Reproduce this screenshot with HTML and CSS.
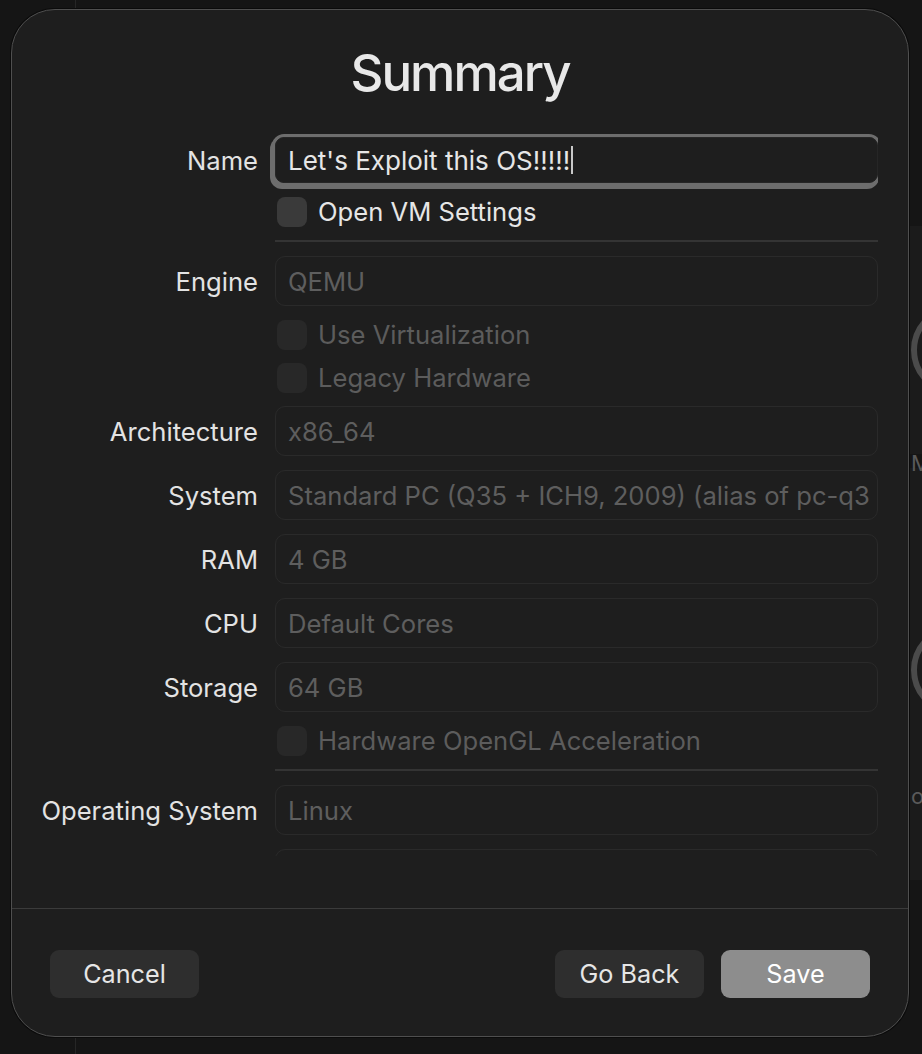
FILE: index.html
```html
<!DOCTYPE html>
<html>
<head>
<meta charset="utf-8">
<link rel="stylesheet" href="styles.css">
</head>
<body>
<div class="desktop">
  <div class="bg-line"></div>
  <div class="bg-card bg-card-1"></div>
  <div class="bg-card bg-card-2"></div>
  <div class="bg-icon bg-icon-1"></div>
  <div class="bg-icon bg-icon-2"></div>
  <div class="bg-text bg-text-1">M</div>
  <div class="bg-text bg-text-2">o</div>

  <div class="dialog">
    <h1 class="title">Summary</h1>
    <div class="scroll">
      <div class="form">
        <div class="label">Name</div>
        <div class="field field-name"><span class="value">Let's Exploit this OS!!!!!</span><span class="caret"></span></div>

        <div class="check enabled"><span class="box"></span><span>Open VM Settings</span></div>
        <div class="sep"></div>

        <div class="label">Engine</div>
        <div class="field"><span class="value">QEMU</span></div>

        <div class="check"><span class="box"></span><span>Use Virtualization</span></div>
        <div class="check"><span class="box"></span><span>Legacy Hardware</span></div>

        <div class="label">Architecture</div>
        <div class="field"><span class="value">x86_64</span></div>

        <div class="label">System</div>
        <div class="field"><span class="value">Standard PC (Q35 + ICH9, 2009) (alias of pc-q35)</span></div>

        <div class="label">RAM</div>
        <div class="field"><span class="value">4 GB</span></div>

        <div class="label">CPU</div>
        <div class="field"><span class="value">Default Cores</span></div>

        <div class="label">Storage</div>
        <div class="field"><span class="value">64 GB</span></div>

        <div class="check"><span class="box"></span><span>Hardware OpenGL Acceleration</span></div>
        <div class="sep"></div>

        <div class="label">Operating System</div>
        <div class="field"><span class="value">Linux</span></div>

        <div class="label"></div>
        <div class="field"><span class="value"></span></div>
      </div>
    </div>
    <div class="spacer"></div>
    <div class="divider"></div>
    <div class="footer">
      <button class="btn btn-cancel">Cancel</button>
      <button class="btn">Go Back</button>
      <button class="btn btn-primary">Save</button>
    </div>
  </div>
</div>
</body>
</html>
```

FILE: styles.css
```css
html, body {
  margin: 0;
  padding: 0;
  background: #151515;
}

.desktop {
  position: relative;
  width: 922px;
  height: 1054px;
  overflow: hidden;
  background: #151515;
  font-family: "Inter", "Liberation Sans", sans-serif;
}

.bg-line {
  position: absolute;
  left: 75px;
  top: 0;
  width: 1px;
  height: 1054px;
  background: #262626;
}

.bg-card {
  position: absolute;
  left: 880px;
  width: 80px;
  background: #1b1b1b;
}
.bg-card-1 { top: 226px; height: 228px; }
.bg-card-2 { top: 468px; height: 412px; }

.bg-icon {
  position: absolute;
  width: 90px;
  height: 90px;
  border: 6px solid #4b4b4b;
  border-radius: 50%;
  box-sizing: border-box;
}
.bg-icon-1 { left: 911px; top: 305px; }
.bg-icon-2 { left: 911px; top: 625px; }

.bg-text {
  position: absolute;
  left: 911px;
  font-size: 22px;
  color: #5a5a5a;
}
.bg-text-1 { top: 450px; }
.bg-text-2 { top: 783px; }

.dialog {
  position: relative;
  z-index: 1;
  margin: 9px 0 0 11px;
  width: 898px;
  height: 1028px;
  box-sizing: border-box;
  background: #1e1e1e;
  border: 1px solid #4f4f4f;
  border-radius: 44px;
  box-shadow: 0 0 0 1px #0b0b0b;
  display: flex;
  flex-direction: column;
  overflow: hidden;
}

.title {
  margin: 36px 0 0 0;
  height: 53px;
  font-size: 51px;
  line-height: 53px;
  font-weight: 500;
  text-align: center;
  color: #e8e8e8;
  letter-spacing: -2px;
}

.scroll {
  margin-top: 26px;
  height: 731px;
  width: 866px;
  overflow: hidden;
  flex: none;
}

.form {
  padding-top: 12px;
  display: grid;
  grid-template-columns: 246px 603px;
  column-gap: 17px;
  row-gap: 14px;
  align-items: center;
}

.label {
  grid-column: 1;
  text-align: right;
  font-size: 25.6px;
  color: #e3e3e3;
  white-space: nowrap;
}

.field {
  grid-column: 2;
  height: 50px;
  box-sizing: border-box;
  border: 1px solid #2a2a2a;
  border-radius: 10px;
  padding: 0 7px 0 12px;
  display: flex;
  align-items: center;
  overflow: hidden;
}

.value {
  font-size: 25.6px;
  color: #5e5e5e;
  white-space: nowrap;
  overflow: hidden;
  min-width: 0;
}

.field-name {
  height: 46px;
  border-color: #262626;
  border-radius: 9px;
  box-shadow: 0 0 0 3px #6d6d6d, -2px 3px 0 3px #6d6d6d;
  overflow: visible;
}
.field-name .value {
  color: #e6e6e6;
  font-size: 26px;
}
.caret {
  display: inline-block;
  flex: none;
  width: 2px;
  height: 28px;
  margin-left: 1px;
  background: #c8c8c8;
}

.check {
  grid-column: 2;
  height: 29px;
  display: flex;
  align-items: center;
  gap: 11px;
  padding-left: 2px;
  font-size: 25.6px;
  color: #5c5c5c;
  white-space: nowrap;
}
.check .box {
  width: 30px;
  height: 30px;
  flex: none;
  border-radius: 8px;
  background: #282828;
}
.check.enabled { color: #e6e6e6; }
.check.enabled .box { background: #3a3a3a; }

.sep {
  grid-column: 2;
  height: 2px;
  background: #343434;
}

.spacer {
  height: 52px;
  flex: none;
}

.divider {
  height: 1px;
  background: #3b3b3b;
  flex: none;
}

.footer {
  display: flex;
  padding: 41px 38px 0 38px;
  gap: 17px;
}

.btn {
  width: 149px;
  height: 48px;
  border: none;
  border-radius: 9px;
  background: #2e2e2e;
  color: #e6e6e6;
  font-family: "Inter", "Liberation Sans", sans-serif;
  font-size: 25.2px;
  padding: 0;
}
.btn-cancel { margin-right: auto; }
.btn-primary {
  background: #8d8d8d;
  color: #ffffff;
}
```
